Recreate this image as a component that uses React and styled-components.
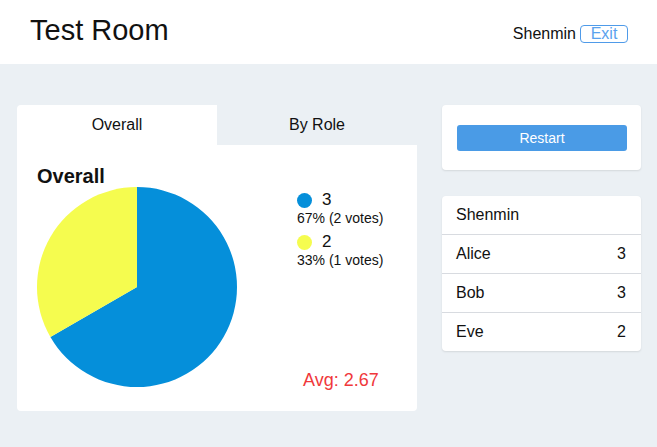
import React from "react";
import styled, { createGlobalStyle } from "styled-components";

const votes = [
  { value: "3", count: 2, color: "#058fda" },
  { value: "2", count: 1, color: "#f5fc4f" },
];

const players = [
  { name: "Shenmin", vote: "" },
  { name: "Alice", vote: "3" },
  { name: "Bob", vote: "3" },
  { name: "Eve", vote: "2" },
];

function Pie({ data, size }) {
  const total = data.reduce((s, d) => s + d.count, 0);
  const r = size / 2;
  let angle = 0;
  const slices = data.map((d) => {
    const start = angle;
    const end = angle + (d.count / total) * Math.PI * 2;
    angle = end;
    const x1 = r + r * Math.sin(start);
    const y1 = r - r * Math.cos(start);
    const x2 = r + r * Math.sin(end);
    const y2 = r - r * Math.cos(end);
    const large = end - start > Math.PI ? 1 : 0;
    return (
      <path
        key={d.value}
        d={`M${r},${r} L${x1},${y1} A${r},${r} 0 ${large} 1 ${x2},${y2} Z`}
        fill={d.color}
      />
    );
  });
  return (
    <svg width={size} height={size} viewBox={`0 0 ${size} ${size}`}>
      {slices}
    </svg>
  );
}

function App() {
  const total = votes.reduce((s, d) => s + d.count, 0);
  return (
    <>
      <GlobalStyle />
      <Header>
        <Title>Test Room</Title>
        <User>
          Shenmin
          <ExitButton>Exit</ExitButton>
        </User>
      </Header>

      <Main>
        <Results>
          <Tabs>
            <Tab active>Overall</Tab>
            <Tab>By Role</Tab>
          </Tabs>
          <Panel>
            <PanelTitle>Overall</PanelTitle>
            <ChartRow>
              <Pie data={votes} size={200} />
              <Side>
                <Legend>
                  {votes.map((v) => (
                    <div key={v.value}>
                      <LegendHead>
                        <Dot color={v.color} />
                        {v.value}
                      </LegendHead>
                      <LegendText>
                        {Math.round((v.count / total) * 100)}% ({v.count} votes)
                      </LegendText>
                    </div>
                  ))}
                </Legend>
                <Avg>Avg: 2.67</Avg>
              </Side>
            </ChartRow>
          </Panel>
        </Results>

        <Sidebar>
          <Card padded>
            <RestartButton>Restart</RestartButton>
          </Card>
          <Card>
            {players.map((p) => (
              <PlayerRow key={p.name}>
                <span>{p.name}</span>
                <span>{p.vote}</span>
              </PlayerRow>
            ))}
          </Card>
        </Sidebar>
      </Main>
    </>
  );
}

export default App;

//styles

const GlobalStyle = createGlobalStyle`
  body {
    margin: 0;
    background: #ebf0f4;
    font-family: "Liberation Sans", Arial, sans-serif;
    color: #111;
  }
`;

const Header = styled.header`
  height: 64px;
  box-sizing: border-box;
  background: #fff;
  display: flex;
  align-items: flex-start;
  justify-content: space-between;
  padding: 14px 29px 0 30px;
`;

const Title = styled.h1`
  margin: 0;
  font-size: 29px;
  font-weight: 400;
  line-height: 33px;
`;

const User = styled.div`
  display: flex;
  align-items: center;
  gap: 4px;
  font-size: 16px;
  line-height: 18px;
  margin-top: 11px;
`;

const ExitButton = styled.button`
  font-family: inherit;
  font-size: 16px;
  color: #5aa2ee;
  background: #fff;
  border: 1px solid #4f9be9;
  border-radius: 4px;
  height: 18px;
  width: 48px;
  padding: 0;
  line-height: 16px;
`;

const Main = styled.main`
  display: flex;
  align-items: flex-start;
  gap: 25px;
  padding: 41px 16px 0 17px;
`;

const Results = styled.section`
  width: 400px;
`;

const Tabs = styled.div`
  display: flex;
`;

const Tab = styled.div`
  width: 200px;
  height: 40px;
  display: flex;
  align-items: center;
  justify-content: center;
  font-size: 16px;
  background: ${(p) => (p.active ? "#fff" : "transparent")};
  border-radius: ${(p) => (p.active ? "4px 0 0 0" : "0")};
`;

const Panel = styled.div`
  background: #fff;
  border-radius: 0 0 4px 4px;
  padding: 20px 20px 20px;
  height: 266px;
  box-sizing: border-box;
`;

const PanelTitle = styled.h2`
  margin: 0;
  font-size: 20px;
  font-weight: 700;
  line-height: 22px;
`;

const ChartRow = styled.div`
  display: flex;
  gap: 60px;
`;

const Side = styled.div`
  flex: 1;
  display: flex;
  flex-direction: column;
  justify-content: space-between;
`;

const Legend = styled.div`
  display: flex;
  flex-direction: column;
  gap: 6px;
  padding-top: 3px;
`;

const LegendHead = styled.div`
  display: flex;
  align-items: center;
  gap: 10px;
  font-size: 17px;
  line-height: 20px;
`;

const Dot = styled.span`
  width: 15px;
  height: 15px;
  border-radius: 50%;
  background: ${(p) => p.color};
`;

const LegendText = styled.div`
  font-size: 14px;
  line-height: 16px;
`;

const Avg = styled.div`
  color: #f0383b;
  font-size: 18px;
  line-height: 21px;
  margin-left: 6px;
  margin-bottom: -4px;
`;

const Sidebar = styled.aside`
  width: 199px;
  display: flex;
  flex-direction: column;
  gap: 26px;
`;

const Card = styled.div`
  background: #fff;
  border-radius: 4px;
  box-shadow: 0 1px 2px rgba(0, 0, 0, 0.1);
  padding: ${(p) => (p.padded ? "20px 14px 19px 15px" : "0")};
`;

const RestartButton = styled.button`
  display: block;
  width: 100%;
  height: 26px;
  border: none;
  border-radius: 3px;
  background: #4a9be6;
  color: #fff;
  font-family: inherit;
  font-size: 14px;
`;

const PlayerRow = styled.div`
  display: flex;
  justify-content: space-between;
  align-items: center;
  height: 38px;
  padding: 0 15px 0 14px;
  font-size: 16px;
  & + & {
    border-top: 1px solid #d8dbe0;
  }
`;
